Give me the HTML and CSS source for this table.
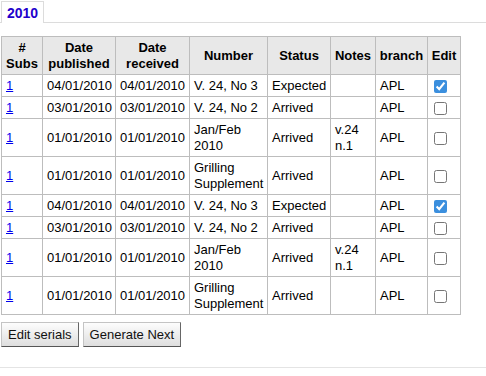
FILE: index.html
```html
<!DOCTYPE html>
<html>
<head>
<meta charset="utf-8">
<link rel="stylesheet" href="styles.css">
</head>
<body>
<div class="page">
  <div class="tabs">
    <div class="tab">2010</div>
  </div>
  <div class="panel">
    <table class="serials">
      <colgroup>
        <col class="c-subs"><col class="c-pub"><col class="c-rec"><col class="c-num"><col class="c-status"><col class="c-notes"><col class="c-branch"><col class="c-edit">
      </colgroup>
      <thead>
        <tr><th>#<br>Subs</th><th>Date<br>published</th><th>Date<br>received</th><th>Number</th><th>Status</th><th>Notes</th><th>branch</th><th>Edit</th></tr>
      </thead>
      <tbody>
        <tr><td><a href="#">1</a></td><td>04/01/2010</td><td>04/01/2010</td><td>V. 24, No 3</td><td>Expected</td><td></td><td>APL</td><td><input type="checkbox" checked></td></tr>
        <tr><td><a href="#">1</a></td><td>03/01/2010</td><td>03/01/2010</td><td>V. 24, No 2</td><td>Arrived</td><td></td><td>APL</td><td><input type="checkbox"></td></tr>
        <tr class="tall"><td><a href="#">1</a></td><td>01/01/2010</td><td>01/01/2010</td><td>Jan/Feb<br>2010</td><td>Arrived</td><td>v.24<br>n.1</td><td>APL</td><td><input type="checkbox"></td></tr>
        <tr class="tall"><td><a href="#">1</a></td><td>01/01/2010</td><td>01/01/2010</td><td>Grilling<br>Supplement</td><td>Arrived</td><td></td><td>APL</td><td><input type="checkbox"></td></tr>
        <tr><td><a href="#">1</a></td><td>04/01/2010</td><td>04/01/2010</td><td>V. 24, No 3</td><td>Expected</td><td></td><td>APL</td><td><input type="checkbox" checked></td></tr>
        <tr><td><a href="#">1</a></td><td>03/01/2010</td><td>03/01/2010</td><td>V. 24, No 2</td><td>Arrived</td><td></td><td>APL</td><td><input type="checkbox"></td></tr>
        <tr class="tall"><td><a href="#">1</a></td><td>01/01/2010</td><td>01/01/2010</td><td>Jan/Feb<br>2010</td><td>Arrived</td><td>v.24<br>n.1</td><td>APL</td><td><input type="checkbox"></td></tr>
        <tr class="tall"><td><a href="#">1</a></td><td>01/01/2010</td><td>01/01/2010</td><td>Grilling<br>Supplement</td><td>Arrived</td><td></td><td>APL</td><td><input type="checkbox"></td></tr>
      </tbody>
    </table>
    <div class="actions">
      <button class="btn">Edit serials</button>
      <button class="btn">Generate Next</button>
    </div>
  </div>
  <div class="footer-rule"></div>
</div>
</body>
</html>
```

FILE: styles.css
```css
html, body {
  margin: 0;
  padding: 0;
  background: #fff;
}
body {
  font-family: "Liberation Sans", Arial, sans-serif;
  font-size: 13px;
  color: #000;
}
.page {
  padding-top: 1px;
}
.tabs {
  display: flex;
  border-bottom: 1px solid #dcdcdc;
  padding-left: 1px;
}
.tab {
  width: 43px;
  height: 22px;
  box-sizing: border-box;
  border: 1px solid #dcdcdc;
  border-bottom: none;
  background: #fff;
  margin-bottom: -1px;
  color: #2200cc;
  font-weight: bold;
  font-size: 14px;
  text-align: center;
  padding-top: 4px;
  line-height: 15px;
}
.panel {
  padding: 13px 0 0 1px;
}
.serials {
  border-collapse: collapse;
  table-layout: fixed;
  width: 460px;
  border: 1px solid #bdbdbd;
}
.c-subs { width: 41px; }
.c-pub { width: 73px; }
.c-rec { width: 74px; }
.c-num { width: 78px; }
.c-status { width: 63px; }
.c-notes { width: 45px; }
.c-branch { width: 52px; }
.c-edit { width: 33px; }
.serials th, .serials td {
  border: 1px solid #bdbdbd;
  padding: 3px 4px 2px;
  line-height: 16px;
  vertical-align: middle;
  white-space: nowrap;
}
.serials th {
  background: #e8e8e8;
  font-weight: bold;
  text-align: center;
  padding-left: 2px;
  padding-right: 2px;
}
.serials td {
  text-align: left;
  height: 16px;
}
.serials tr.tall td {
  height: 32px;
}
.serials a {
  color: #0000ee;
}
.serials input[type="checkbox"] {
  margin: 0 0 0 2px;
  width: 13px;
  height: 13px;
  vertical-align: middle;
  accent-color: #3b8fde;
}
.actions {
  display: flex;
  gap: 4px;
  padding-top: 7px;
}
.btn {
  font-family: "Liberation Sans", Arial, sans-serif;
  font-size: 13px;
  color: #111;
  height: 25px;
  padding: 0 6px;
  border: 1px solid #c4c4c4;
  border-right-color: #666;
  border-bottom-color: #555;
  background: linear-gradient(#fdfdfd, #dedede);
  border-radius: 0;
}
.footer-rule {
  margin-top: 20px;
  border-top: 1px solid #e4e4e4;
}
```
